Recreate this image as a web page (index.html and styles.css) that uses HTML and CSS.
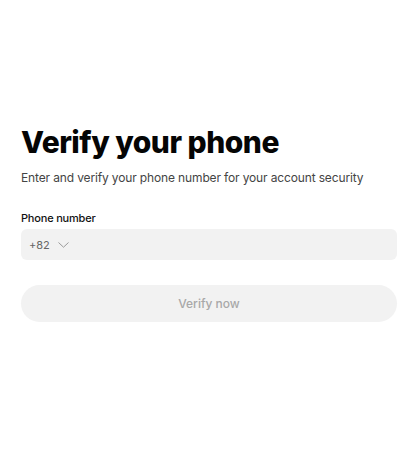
FILE: index.html
```html
<!DOCTYPE html>
<html lang="en">
<head>
<meta charset="utf-8">
<title>Verify your phone</title>
<link rel="stylesheet" href="styles.css">
</head>
<body>
<main class="page">
  <h1 class="title">Verify your phone</h1>
  <p class="subtitle">Enter and verify your phone number for your account security</p>
  <form class="form">
    <label class="label" for="phone">Phone number</label>
    <div class="field">
      <button type="button" class="code">
        <span>+82</span>
        <svg class="chev" width="11" height="6" viewBox="0 0 11 6" aria-hidden="true"><path d="M0.5 0.5 L5.5 5.2 L10.5 0.5" fill="none" stroke="#9a9a9a" stroke-width="1"/></svg>
      </button>
      <input id="phone" class="input" type="tel">
    </div>
    <button type="button" class="submit" disabled>Verify now</button>
  </form>
</main>
</body>
</html>
```
FILE: styles.css
```css
html, body {
  margin: 0;
  padding: 0;
  background: #ffffff;
}
body {
  font-family: Inter, "Liberation Sans", Arial, sans-serif;
  color: #0a0a0a;
}
.page {
  padding: 124px 22px 0 21px;
  display: flex;
  flex-direction: column;
}
.title {
  margin: 0;
  font-size: 30px;
  line-height: 36px;
  font-weight: 800;
  letter-spacing: -0.5px;
  color: #050505;
}
.subtitle {
  margin: 10px 0 0;
  font-size: 12px;
  line-height: 16px;
  letter-spacing: -0.14px;
  color: #444444;
}
.form {
  display: flex;
  flex-direction: column;
  margin-top: 25px;
}
.label {
  font-size: 11px;
  line-height: 14px;
  font-weight: 500;
  letter-spacing: -0.2px;
  color: #111111;
}
.field {
  margin-top: 4px;
  height: 31px;
  background: #f2f2f2;
  border-radius: 6px;
  display: flex;
  align-items: center;
}
.code {
  display: flex;
  align-items: center;
  gap: 8px;
  border: 0;
  background: transparent;
  padding: 0 0 0 8px;
  font: inherit;
  font-size: 11px;
  color: #666666;
}
.chev {
  display: block;
}
.input {
  flex: 1;
  border: 0;
  background: transparent;
  height: 100%;
  outline: none;
}
.submit {
  margin-top: 25px;
  height: 37px;
  border: 0;
  border-radius: 19px;
  background: #f2f2f2;
  font-family: inherit;
  font-size: 12px;
  font-weight: 500;
  color: #a8a8a8;
}
```
